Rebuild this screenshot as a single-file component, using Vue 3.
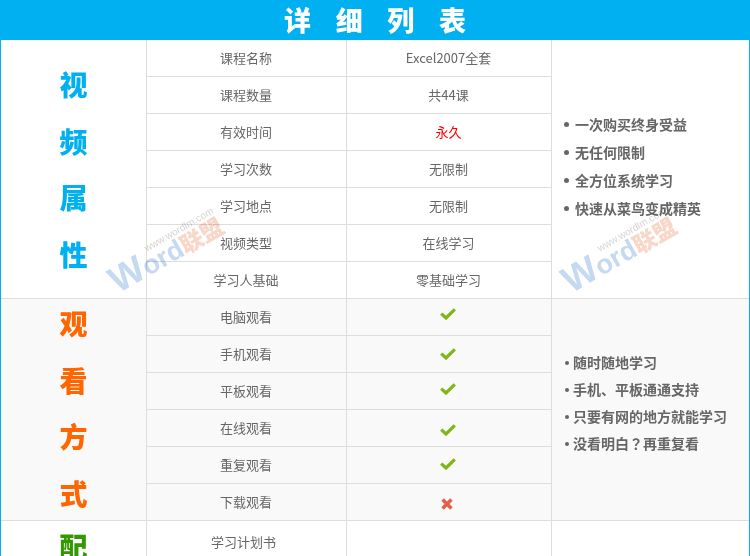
<script setup>
const sections = [
  {
    key: 'video',
    tone: 'blue',
    chars: ['视', '频', '属', '性'],
    rows: [
      { label: '课程名称', value: 'Excel2007全套' },
      { label: '课程数量', value: '共44课' },
      { label: '有效时间', value: '永久', red: true },
      { label: '学习次数', value: '无限制' },
      { label: '学习地点', value: '无限制' },
      { label: '视频类型', value: '在线学习' },
      { label: '学习人基础', value: '零基础学习' }
    ],
    notes: ['一次购买终身受益', '无任何限制', '全方位系统学习', '快速从菜鸟变成精英']
  },
  {
    key: 'watch',
    tone: 'orange',
    chars: ['观', '看', '方', '式'],
    rows: [
      { label: '电脑观看', mark: 'yes', shift: -5 },
      { label: '手机观看', mark: 'yes', shift: 1 },
      { label: '平板观看', mark: 'yes', shift: -3 },
      { label: '在线观看', mark: 'yes', shift: 5 },
      { label: '重复观看', mark: 'yes', shift: -1 },
      { label: '下载观看', mark: 'no', shift: 6 }
    ],
    notes: ['随时随地学习', '手机、平板通通支持', '只要有网的地方就能学习', '没看明白？再重复看']
  },
  {
    key: 'extra',
    tone: 'green',
    chars: ['配'],
    rows: [{ label: '学习计划书', value: '' }],
    notes: []
  }
]

const parts = (text) => text.split(/(？)/)
</script>

<template>
  <div class="page">
    <h1 class="title"><span>详</span><span>细</span><span>列</span><span>表</span></h1>
    <section v-for="s in sections" :key="s.key" class="section" :class="s.key">
      <div class="side" :class="s.tone">
        <span v-for="c in s.chars" :key="c" class="side-char">{{ c }}</span>
      </div>
      <div class="rows">
        <div v-for="r in s.rows" :key="r.label" class="row">
          <div class="cell label">{{ r.label }}</div>
          <div class="cell value" :class="{ red: r.red }">
            <svg v-if="r.mark === 'yes'" class="mark" :style="{ marginTop: r.shift + 'px' }" width="16" height="12" viewBox="0 0 16 12">
              <path d="M1.2 5.6 L6 10 L14.8 1.4" fill="none" stroke="#7fb515" stroke-width="3.2" />
            </svg>
            <svg v-else-if="r.mark === 'no'" class="mark cross" :style="{ marginTop: r.shift + 'px' }" width="12" height="12" viewBox="0 0 12 12">
              <path d="M1.6 1.6 L10.4 10.4 M10.4 1.6 L1.6 10.4" fill="none" stroke="#e2604a" stroke-width="3.6" />
            </svg>
            <template v-else>{{ r.value }}</template>
          </div>
        </div>
      </div>
      <ul class="notes">
        <li v-for="n in s.notes" :key="n">
          <span v-for="(p, i) in parts(n)" :key="i" :class="{ qm: p === '？' }">{{ p }}</span>
        </li>
      </ul>
    </section>
    <div class="stamp stamp-a" aria-hidden="true">
      <small>www.wordlm.com</small>
      <div><b>W</b><em>ord</em><i>联盟</i></div>
    </div>
    <div class="stamp stamp-b" aria-hidden="true">
      <small>www.wordlm.com</small>
      <div><b>W</b><em>ord</em><i>联盟</i></div>
    </div>
  </div>
</template>

<style>
html, body { margin: 0; overflow: hidden; background: #fff; }
</style>

<style scoped>
.page {
  position: relative;
  width: 750px;
  height: 556px;
  overflow: hidden;
  box-sizing: border-box;
  border-left: 1px solid #00b0f0;
  border-right: 1px solid #00b0f0;
  font-family: "Noto Sans CJK SC", "Noto Sans", sans-serif;
  font-size: 13px;
  color: #666;
}
.title {
  display: flex;
  justify-content: center;
  gap: 24.7px;
  height: 40px;
  margin: 0 -1px;
  background: #00b0f0;
  color: #fff;
  font-size: 27px;
  font-weight: 900;
  line-height: 40px;
}
.section {
  display: grid;
  grid-template-columns: 146px 405px 1fr;
  border-bottom: 1px solid #ddd;
}
.watch { background: #f9f9f9; }
.side {
  display: flex;
  flex-direction: column;
  align-items: center;
  justify-content: center;
  gap: 28.7px;
  border-right: 1px solid #ddd;
  box-sizing: border-box;
  font-size: 28px;
  font-weight: 900;
}
.side-char { display: block; height: 28px; line-height: 28px; }
.blue { color: #00b0f0; }
.orange { color: #ff6600; padding-bottom: 3px; }
.green { color: #339900; justify-content: flex-start; padding-top: 11px; }
.rows { display: flex; flex-direction: column; }
.row {
  display: grid;
  grid-template-columns: 200px 205px;
  height: 37px;
  box-sizing: border-box;
  border-bottom: 1px solid #ddd;
}
.row:last-child { border-bottom: 0; height: 36px; }
.cell {
  display: flex;
  align-items: center;
  justify-content: center;
  border-right: 1px solid #ddd;
  padding: 0 1px 2px 0;
}
.red { color: #f00; }
.mark { margin-right: 2px; }
.cross { margin-right: 4px; }
.notes {
  list-style: none;
  margin: 0;
  padding: 0 0 6px 12px;
  display: flex;
  flex-direction: column;
  justify-content: center;
  font-size: 14px;
  font-weight: 700;
  line-height: 28px;
}
.notes li { position: relative; padding-left: 11px; }
.notes li::before {
  content: "";
  position: absolute;
  left: 0;
  top: 12px;
  width: 5px;
  height: 5px;
  border-radius: 50%;
  background: #666;
}
.qm { font-family: "Noto Sans CJK TC", sans-serif; }
.watch .notes { line-height: 27px; padding-bottom: 14px; }
.watch .notes li { padding-left: 9px; }
.watch .notes li::before { width: 4px; height: 4px; left: 1px; top: 12px; }
.extra { height: 100px; }
.extra .row:last-child { height: 42px; }
.extra .label { padding-right: 6px; }
.stamp {
  position: absolute;
  top: 263px;
  width: 135px;
  transform: rotate(-30deg);
  transform-origin: left bottom;
  pointer-events: none;
  mix-blend-mode: multiply;
  line-height: 1;
  white-space: nowrap;
}
.stamp-a { left: 120px; }
.stamp-b { left: 573px; }
.stamp small {
  display: block;
  padding-left: 46px;
  margin-bottom: -11px;
  font-family: "Liberation Sans", sans-serif;
  font-size: 10px;
  color: #d4d4d4;
}
.stamp div { display: flex; align-items: baseline; }
.stamp b, .stamp em {
  font-family: "Liberation Sans", sans-serif;
  font-style: normal;
  font-weight: 700;
  color: #c5d9f1;
}
.stamp b { font-size: 37px; }
.stamp em { font-size: 27px; }
.stamp i {
  font-style: normal;
  font-size: 23px;
  font-weight: 900;
  color: #f8d7c8;
}
</style>
